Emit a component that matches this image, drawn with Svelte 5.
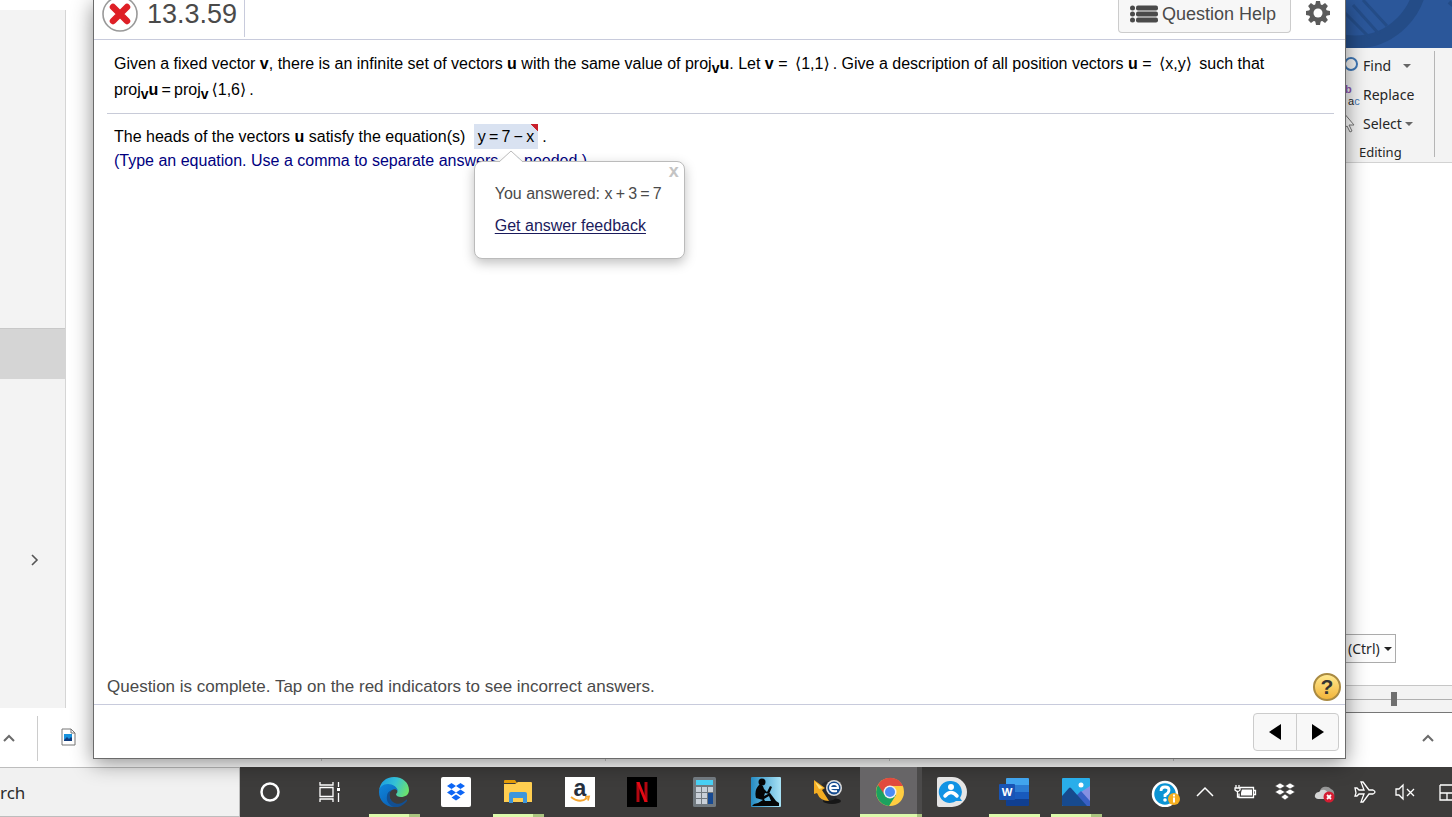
<script lang="ts">
  type App = { id: string; label: string; state?: 'open' | 'stacked' | 'active' };

  const apps: App[] = [
    { id: 'edge', label: 'Edge', state: 'stacked' },
    { id: 'dropbox', label: 'Dropbox' },
    { id: 'files', label: 'File Explorer', state: 'stacked' },
    { id: 'amazon', label: 'Amazon' },
    { id: 'netflix', label: 'Netflix' },
    { id: 'calc', label: 'Calculator' },
    { id: 'kindle', label: 'Kindle' },
    { id: 'converter', label: 'Converter' },
    { id: 'chrome', label: 'Chrome', state: 'active' },
    { id: 'assist', label: 'Assistant' },
    { id: 'word', label: 'Word', state: 'open' },
    { id: 'photos', label: 'Photos', state: 'stacked' },
  ];

  const tray = ['help', 'up', 'battery', 'dropboxTray', 'cloud', 'plane', 'mute', 'notes'];

  let popupOpen = $state(true);
  let search = $state('rch');
</script>

{#snippet chevronUp()}
  <svg width="12" height="8" viewBox="0 0 12 8"><path d="M1 7 6 2l5 5" fill="none" stroke="#6b6b6b" stroke-width="2" /></svg>
{/snippet}

{#snippet appIcon(id: string)}
  <svg width="30" height="30" viewBox="0 0 30 30" aria-hidden="true">
    {#if id === 'edge'}
      <defs>
        <linearGradient id="edgeTop" x1="0" y1=".3" x2="1" y2=".6">
          <stop offset="0" stop-color="#1b9de2" /><stop offset=".5" stop-color="#35c1d5" /><stop offset="1" stop-color="#6de36b" />
        </linearGradient>
        <linearGradient id="edgeLow" x1="0" y1="0" x2=".6" y2="1">
          <stop offset="0" stop-color="#0f86dc" /><stop offset="1" stop-color="#0b63b8" />
        </linearGradient>
      </defs>
      <path d="M0 14C1 5 7 0 15 0c9 0 15 6 15 13 0 5-4 7-8 7-3 0-5-1-5-3 1-1 2-2 1-4-1-3-4-5-8-5C5 8 1 10 0 14Z" fill="url(#edgeTop)" />
      <path d="M0 15c0-5 4-8 9-8s9 3 10 7c-2-2-4-2-6-1-5 3-3 11 4 15l2 1c-1 1-3 1-4 1C6 30 0 23 0 15Z" fill="url(#edgeLow)" />
      <path d="M13 13c-4 3-3 9 1 12 4 3 9 2 13-2 1-1 1 0 1 1-3 4-8 7-13 6-5-2-8-6-7-11 0-3 2-5 5-6Z" fill="#124f92" />
    {:else if id === 'dropbox'}
      <rect width="30" height="30" rx="2" fill="#fff" />
      <path d="m10.500 6 4.500 3-4.500 3L6 9Zm9 0L24 9l-4.500 3L15 9Zm-9 6.500 4.500 3-4.500 3-4.500-3Zm9 0 4.500 3-4.500 3-4.500-3ZM15 17.500l4.500 3L15 23.500l-4.500-3Z" fill="#0d66f5" />
    {:else if id === 'files'}
      <path d="M1 4q0-1 1-1h10l2 3H1Z" fill="#e39b06" />
      <path d="M1 7h11l3-2h13q1 0 1 1v19H1Z" fill="#ffce50" />
      <path d="M6 26V17q0-2 2-2h14q2 0 2 2v9h-4v-5H10v5Z" fill="#3d96dd" />
    {:else if id === 'amazon'}
      <rect width="30" height="30" fill="#fff" />
      <text x="15" y="19" text-anchor="middle" font-family="Liberation Sans, sans-serif" font-weight="700" font-size="23" fill="#252f3e">a</text>
      <path d="M6 20q9 7 16 1M20 20l4-.5-1 4" fill="none" stroke="#f5a52f" stroke-width="1.800" />
    {:else if id === 'netflix'}
      <rect width="30" height="30" fill="#000" />
      <path d="M11 5v20M19 5v20" stroke="#b20710" stroke-width="3" />
      <path d="M9.500 5h3l8 20h-3Z" fill="#e50914" />
    {:else if id === 'calc'}
      <rect x="4" width="23" height="30" rx="1.500" fill="#71797f" />
      <rect x="7" y="3" width="17" height="5" fill="#48cff3" />
      <path d="M7 10h5v5H7Zm6 0h5v5h-5Zm6 0h5v5h-5ZM7 16h5v5H7Zm6 0h5v5h-5ZM7 22h5v5H7Zm6 0h5v5h-5Z" fill="#c9d0d8" />
      <path d="M19 16h5v11h-5Z" fill="#174a92" />
    {:else if id === 'kindle'}
      <defs><linearGradient id="sky"><stop stop-color="#258cc4" /><stop offset="1" stop-color="#a8e2f5" /></linearGradient></defs>
      <rect width="30" height="30" rx="1" fill="url(#sky)" />
      <circle cx="11" cy="5" r="3.500" fill="#050505" />
      <path d="M8 8q4-1 5 4l3 3 3-6 2 1-3 7-4-1-1 3 6-3 6 8 3 2v3H1l2-2 4-1 5-3-7-2Q3 13 8 8Z" fill="#050505" />
      <path d="m13 22 5-3 2 5h-6Z" fill="#62b7df" />
    {:else if id === 'converter'}
      <ellipse cx="19" cy="24" rx="9" ry="3" fill="#171717" />
      <circle cx="16" cy="14" r="10" fill="#2a2a2b" />
      <path d="m1 3 11 8-3 2 7 11q-9 0-12-8l-3 1Z" fill="#f4ad22" />
      <path d="m2 5 8 6-4 1Z" fill="#ffe27b" />
      <circle cx="21" cy="11" r="8" fill="#dedede" />
      <circle cx="21" cy="11" r="6.500" fill="#154b8e" />
      <path d="M17 11h8q0-4-4-4t-4 4 7 3" fill="none" stroke="#fff" stroke-width="2" />
    {:else if id === 'chrome'}
      <circle cx="15" cy="15" r="14" fill="#ffcd41" />
      <path d="M15 15 3 8a14 14 0 0 0 11 21l7-11Z" fill="#1ba15f" />
      <path d="M3 8a14 14 0 0 1 25 1H15a6 6 0 0 0-6 8Z" fill="#e04a3f" />
      <circle cx="15" cy="15" r="6.500" fill="#f1f1f1" />
      <circle cx="15" cy="15" r="5" fill="#4c8bf5" />
    {:else if id === 'assist'}
      <path d="M2 0h13a15 15 0 0 1 0 30H2Q0 30 0 28V2q0-2 2-2Z" fill="#e5e5e5" />
      <path d="M14 4a11 11 0 1 0 5 20h6l-2-3A11 11 0 0 0 14 4Z" fill="#1193e4" />
      <circle cx="14" cy="10" r="3" fill="#fff" />
      <path d="M8 19q6-7 12 0" fill="none" stroke="#fff" stroke-width="3.500" stroke-linecap="round" />
    {:else if id === 'word'}
      <path d="M7 2q0-1 1-1h21q1 0 1 1v6H7Z" fill="#41a5ee" />
      <path d="M7 8h23v7H7Z" fill="#2b7cd3" />
      <path d="M7 15h23v7H7Z" fill="#185abd" />
      <path d="M7 22h23v6q0 1-1 1H8q-1 0-1-1Z" fill="#103f91" />
      <rect y="7" width="16" height="16" rx="1" fill="#1854b5" />
      <text x="8" y="19" text-anchor="middle" font-family="Open Sans, sans-serif" font-weight="700" font-size="11" fill="#fff">W</text>
    {:else if id === 'photos'}
      <rect x="1" y="1" width="28" height="28" rx="1" fill="#29aeea" />
      <path d="M29 9v18L17 17Z" fill="#8790e2" />
      <path d="m15 19 5-5 9 10v5H18Z" fill="#3a60c4" />
      <path d="M1 19 8 11q1-1 2 0l16 18H2q-1 0-1-1Z" fill="#174a8e" />
      <circle cx="20" cy="8" r="2.500" fill="#fff" />
    {/if}
  </svg>
{/snippet}

{#snippet trayIcon(id: string)}
  <svg width="30" height="30" viewBox="0 0 30 30" fill="none" stroke="#fff" stroke-width="1.300" aria-hidden="true">
    {#if id === 'help'}
      <circle cx="15" cy="17" r="12" fill="#0b94d4" stroke-width="2.500" />
      <path d="M11 14q0-4 4-4t4 3-4 5v2" stroke-width="2.800" />
      <circle cx="15" cy="23" r="1.800" fill="#fff" stroke="none" />
      <circle cx="24" cy="22" r="6" fill="#f5ae20" stroke="none" />
      <path d="M24 20.500v5M24 17.500v2" stroke-width="2" />
    {:else if id === 'up'}
      <path d="m7 19 8-8 8 8" stroke-width="1.500" />
    {:else if id === 'battery'}
      <path d="M10 10.500h13.500v10H9v-4M24 13.500h1.500v4H24" />
      <path d="M12 12.500h10v6H11v-3Z" fill="#fff" stroke="none" />
      <path d="M6 8v3M9 8v3M5 11h5v2q-2 3-5 0ZM7.500 15v5H9" />
    {:else if id === 'dropboxTray'}
      <path d="m10 6 5 3-5 3-5-3Zm10 0 5 3-5 3-5-3ZM10 12l5 3-5 3-5-3Zm10 0 5 3-5 3-5-3ZM15 17l4 3-4 3-4-3Z" fill="#fff" stroke="#3c3b3a" stroke-width=".6" />
    {:else if id === 'cloud'}
      <path d="M10 14a6 5 0 0 1 11-2q4 1 3 8H12Z" fill="#969696" stroke="none" />
      <path d="M8 22q-4-1-3-4 1-3 4-3 2-3 6-2 4 2 3 9Z" fill="#d5d5d5" stroke="none" />
      <circle cx="19" cy="20" r="5.500" fill="#d51d32" stroke="none" />
      <path d="m17 18 4 4m0-4-4 4" stroke-width="1.800" />
    {:else if id === 'plane'}
      <path d="M5 11h2l2 2h5l-3-8h2l6 8h4q4 2 0 4h-4l-6 8h-2l3-8H9l-2 2H5l1-3Z" />
    {:else if id === 'mute'}
      <path d="M6 12h3l4-4v14l-4-4H6Zm11 0 7 7m0-7-7 7" />
    {:else}
      <path d="M1 8h14v15H1v-15m0 8h14m-7 0v7" />
    {/if}
  </svg>
{/snippet}

{#snippet vec(a: string, b: string)}
  <span class="vec"><span class="angle">⟨</span>{a},{b}<span class="angle">⟩</span></span>
{/snippet}

{#snippet proj()}
  proj<sub>v</sub>
{/snippet}

<div class="screen">
  <div class="desktop">
    <div class="behind">
      <aside class="nav-pane">
        <div class="nav-item"></div>
        <button class="expand" aria-label="Expand">
          <svg width="8" height="14" viewBox="0 0 8 14"><path d="m1 2 5 5-5 5" fill="none" stroke="#555" stroke-width="1.600" /></svg>
        </button>
      </aside>

      <aside class="word">
        <div class="word-title">
          <svg width="107" height="48" viewBox="0 0 107 48" aria-hidden="true">
            <g fill="none" stroke="#244c87">
              <circle cx="10" cy="-24" r="66" stroke-width="13" />
              <path d="m-2 11 27 27M8 5l26 29M18 0l24 26" stroke-width="3" />
              <path d="m104 2 6 5" stroke-width="4" />
            </g>
          </svg>
        </div>
        <div class="ribbon">
          <div class="group">
            <button>
              <svg width="16" height="18" viewBox="0 0 16 18"><circle cx="6" cy="7" r="6" fill="none" stroke="#3f77b5" stroke-width="2" /></svg>
              <span>Find</span><i class="caret far"></i>
            </button>
            <button>
              <span class="swap"><b>b</b><span>a<em>c</em></span></span>
              <span>Replace</span>
            </button>
            <button>
              <svg width="16" height="18" viewBox="0 0 16 18"><path d="M-2-3 9 10H4l3 6-2 1-3-6-4 3" fill="#fff" stroke="#777" /></svg>
              <span>Select</span><i class="caret"></i>
            </button>
            <div class="group-name">Editing</div>
          </div>
        </div>
        <div class="page">
          <button class="ctrl">(Ctrl) <i class="caret dark"></i></button>
        </div>
        <div class="status">
          <input type="range" aria-label="Zoom" min="0" max="100" value="46" />
        </div>
      </aside>
    </div>

    <div class="shelf">
      <button class="shelf-first" aria-label="Options">{@render chevronUp()}</button>
      <div class="download">
        <svg width="15" height="18" viewBox="0 0 15 18">
          <path d="M1 1h9l4 4v12H1Z" fill="#fff" stroke="#777" />
          <path d="M10 1v4h4" fill="none" stroke="#777" />
          <rect x="3" y="6" width="8" height="7" fill="#1691dd" />
          <path d="m3 12 3-3 2 2 2-2 1 1v3H3Z" fill="#103b7c" />
        </svg>
      </div>
      {#each [1, 2, 3, 4] as n (n)}
        <div class="download"></div>
      {/each}
      <button class="shelf-last" aria-label="Download options">{@render chevronUp()}</button>
    </div>

    <main class="window">
      <header>
        <div class="title">
          <svg width="36" height="32" viewBox="0 4 36 32" aria-label="Incorrect">
            <circle cx="18" cy="18" r="17" fill="#fff" stroke="#999" stroke-width="1.600" />
            <path d="m11 11 14 14m0-14L11 25" stroke="#de1f26" stroke-width="6.500" stroke-linecap="round" />
          </svg>
          <h1>13.3.59</h1>
        </div>
        <button class="help-btn">
          <svg width="28" height="18" viewBox="0 0 28 18" fill="#4a4a4a">
            <circle cx="2.500" cy="3" r="2.500" /><circle cx="2.500" cy="9" r="2.500" /><circle cx="2.500" cy="15" r="2.500" />
            <rect x="6" y="0.500" width="22" height="5" rx="2" /><rect x="6" y="6.500" width="22" height="5" rx="2" /><rect x="6" y="12.500" width="22" height="5" rx="2" />
          </svg>
          Question Help
        </button>
        <button class="gear" aria-label="Settings">
          <svg width="26" height="26" viewBox="-13 -13 26 26">
            <g fill="#5b5b5b">
              {#each [0, 45, 90, 135] as angle (angle)}
                <path d="M-2-12h4L3-7V7l-1 5h-4l-1-5V-7Z" transform="rotate({angle})" />
              {/each}
              <circle r="9" />
            </g>
            <circle r="4.500" fill="#fff" />
          </svg>
        </button>
      </header>

      <section class="question">
        <p>
          Given a fixed vector <b>v</b>, there is an infinite set of vectors <b>u</b> with the same value of {@render proj()}<b>u</b>. Let <b>v</b> = {@render vec('1', '1')}. Give a description of all position vectors <b>u</b> = {@render vec('x', 'y')} such that
          <span class="math">{@render proj()}<b>u</b>&thinsp;=&thinsp;{@render proj()}{@render vec('1', '6')}</span>.
        </p>
      </section>

      <section class="work">
        <p>
          The heads of the vectors <b>u</b> satisfy the equation(s)
          <span class="answer"><button onclick={() => (popupOpen = true)}>y&thinsp;=&thinsp;7&thinsp;−&thinsp;x</button>
            {#if popupOpen}
              <span class="popup" role="dialog" aria-label="Answer">
                <svg class="tip" width="24" height="13" viewBox="0 0 24 13"><path d="M0 12 12 1l12 11v1H0Z" fill="#fff" /><path d="M0 12 12 1l12 11" fill="none" stroke="#bbb" /></svg>
                <button class="close" aria-label="Close" onclick={() => (popupOpen = false)}>x</button>
                <span class="line">You answered: <span class="math">x&thinsp;+&thinsp;3&thinsp;=&thinsp;7</span></span>
                <a href="#feedback">Get answer feedback</a>
              </span>
            {/if}
          </span>.
        </p>
        <p class="hint">(Type an equation. Use a comma to separate answers as needed.)</p>
      </section>

      <div class="message">
        <span>Question is complete. Tap on the red indicators to see incorrect answers.</span>
        <button class="hint-btn" aria-label="Help">?</button>
      </div>

      <footer>
        <div class="pager">
          <button aria-label="Previous"><svg width="12" height="18" viewBox="0 0 12 18"><path d="M12 1v16L0 9Z" /></svg></button>
          <button aria-label="Next"><svg width="12" height="18" viewBox="0 0 12 18"><path d="M0 1v16l12-8Z" /></svg></button>
        </div>
      </footer>
    </main>
  </div>

  <nav class="taskbar">
    <input class="search" type="text" aria-label="Search" bind:value={search} />
    <button class="sys" aria-label="Cortana">
      <svg width="22" height="22" viewBox="0 0 22 22"><circle cx="11" cy="11" r="8.500" fill="none" stroke="#fff" stroke-width="2.500" /></svg>
    </button>
    <button class="sys" aria-label="Task view">
      <svg width="22" height="22" viewBox="0 0 22 22" fill="none" stroke="#fff" stroke-width="1.300"><path d="M1 1v3h13V1M1 6.500h13v9H1ZM1 21v-3h13v3M19.500 1v5M19.500 12v9" /><path d="M18 7h3v3h-3Z" fill="#fff" stroke="none" /></svg>
    </button>
    <div class="apps">
      {#each apps as app (app.id)}
        <button class="app {app.state ?? ''}" aria-label={app.label}>{@render appIcon(app.id)}</button>
      {/each}
    </div>
    <div class="tray">
      {#each tray as id (id)}
        <button class:last={id === 'notes'} aria-label={id}>{@render trayIcon(id)}</button>
      {/each}
    </div>
  </nav>
</div>

<style>
  :global(body) { overflow: hidden; background: #fff; }

  button {
    padding: 0;
    border: 0;
    background: none;
    font: inherit;
    color: inherit;
  }
  svg { display: block; flex: none; }

  .screen {
    display: flex;
    flex-direction: column;
    height: 100vh;
    font-family: "Noto Sans", sans-serif;
    font-size: 14px;
    color: #262626;
    overflow: hidden;
  }
  .desktop {
    position: relative;
    flex: 1;
    display: flex;
    flex-direction: column;
    min-height: 0;
  }
  .behind {
    flex: 1;
    display: flex;
    justify-content: space-between;
    min-height: 0;
  }

  .nav-pane {
    display: flex;
    flex-direction: column;
    width: 65px;
    margin: 10px 0 5px;
    background: #f3f3f3;
    border-right: 1px solid #d5d5d5;
  }
  .nav-item {
    height: 50px;
    margin-top: 318px;
    background: #d5d5d5;
    border-top: 1px solid #c8c8c8;
  }
  .expand { align-self: center; margin: 174px 0 0 4px; }

  .word {
    display: flex;
    flex-direction: column;
    width: 107px;
  }
  .word-title { height: 48px; background: #2b579a; overflow: hidden; }
  .ribbon {
    display: flex;
    height: 114px;
    background: #f3f3f3;
    border-bottom: 1px solid #d2d2d2;
  }
  .group {
    width: 89px;
    margin: 3px 0 5px;
    border-right: 1px solid #b5b5b5;
  }
  .group button {
    display: flex;
    align-items: center;
    gap: 2px;
    height: 29px;
    line-height: 20px;
  }
  .group-name { padding-left: 14px; font-size: 13px; line-height: 29px; }
  .swap { width: 16px; font: 11px/12px "Liberation Sans", Arial, sans-serif; text-align: left; }
  .swap b { display: block; color: #8d55ad; }
  .swap > span { padding-left: 3px; }
  .swap em { font-style: normal; color: #3f77b5; }
  .caret {
    margin-left: 1px;
    border: solid transparent;
    border-width: 4px 4px 0;
    border-top-color: #666;
  }
  .caret.far { margin-left: 10px; }
  .caret.dark { border-top-color: #222; }
  .page { flex: 1; display: flex; align-items: flex-end; padding-bottom: 22px; }
  .ctrl {
    display: flex;
    align-items: center;
    gap: 3px;
    height: 29px;
    padding: 0 3px 0 2px;
    border: 1px solid #ababab;
    background: #fdfdfd;
  }
  .status {
    display: flex;
    align-items: center;
    height: 26px;
    background: #f3f3f3;
    border-top: 1px solid #c6c6c6;
    border-bottom: 1px solid #777;
  }
  .status input {
    appearance: none;
    width: 100%;
    height: 1px;
    margin: 0;
    background: #b0b0b0;
  }
  .status input::-webkit-slider-thumb {
    appearance: none;
    width: 6px;
    height: 14px;
    background: #6f6f6f;
  }

  .shelf { display: flex; height: 54px; background: #fff; }
  .shelf button { flex: none; display: flex; justify-content: center; align-items: center; height: 50px; }
  .shelf-first { width: 37px; padding-right: 19px; }
  .shelf-last { margin-left: auto; width: 48px; }
  .download {
    flex: 0 1 284px;
    display: flex;
    align-items: center;
    height: 45px;
    margin-top: 3px;
    padding: 0 0 4px 23px;
    border-left: 1px solid #ccc;
    box-sizing: border-box;
  }
  .download:nth-child(n + 6) { flex: none; width: 10px; }

  .window {
    position: absolute;
    inset: 0 106px 8px 93px;
    display: flex;
    flex-direction: column;
    background: #fff;
    border: solid #6b6b6b;
    border-width: 0 1px 1px;
    box-shadow: 0 4px 20px rgba(0, 0, 0, 0.45);
    font: 16px/26px "Liberation Sans", Arial, sans-serif;
    color: #000;
  }
  header {
    display: flex;
    align-items: flex-start;
    height: 39px;
    border-bottom: 1px solid #c8cbdc;
    color: #4a4a4a;
  }
  .title {
    display: flex;
    align-items: flex-start;
    gap: 9px;
    height: 37px;
    padding: 0 7px 0 8px;
    border-right: 1px solid #c8cbdc;
  }
  h1 { margin: 0; font-size: 27px; line-height: 29px; font-weight: 400; }
  .help-btn {
    display: flex;
    align-items: center;
    gap: 4px;
    height: 33px;
    margin-left: auto;
    padding: 0 14px 4px 11px;
    border: 1px solid #ccc;
    border-top: 0;
    border-radius: 0 0 4px 4px;
    background: #f7f7f7;
    font-size: 18px;
    box-sizing: border-box;
  }
  .gear { margin: 0 14px; }

  .question {
    margin: 0 11px 0 13px;
    padding: 11px 50px 10px 7px;
    border-bottom: 1px solid #c8cbd8;
  }
  .work { flex: 1; padding: 10px 20px; line-height: 23px; }
  p { margin: 0; }
  .math { white-space: nowrap; }
  sub { font-weight: 700; line-height: 0; font-size: 14px; vertical-align: -4px; }
  .vec { margin: 0 3px; }
  .angle { font-family: "DejaVu Sans", sans-serif; }
  .answer { position: relative; display: inline-block; margin: 0 4px; }
  .answer > button {
    padding: 0 4px;
    height: 25px;
    background: linear-gradient(45deg, transparent 50%, #c9202c 50%) top right / 7px 7px no-repeat, #d9e2f1;
  }
  .hint { color: #000080; }
  .popup {
    position: absolute;
    top: 37px;
    left: 0;
    display: flex;
    flex-direction: column;
    gap: 6px;
    width: max-content;
    padding: 19px 22px 19px 20px;
    border: 1px solid #bbb;
    border-radius: 8px;
    background: #fff;
    box-shadow: 0 4px 12px rgba(0, 0, 0, 0.25);
    line-height: 26px;
    color: #4a4a4a;
  }
  .popup a { color: #1b1b5c; text-underline-offset: 2px; }
  .tip { position: absolute; top: -12px; left: 24px; }
  .close {
    position: absolute;
    top: 0;
    right: 5px;
    font-weight: 700;
    font-size: 18px;
    line-height: 18px;
    color: #c4c4c4;
  }

  .message {
    display: flex;
    justify-content: space-between;
    align-items: center;
    padding: 0 4px 3px 13px;
    border-bottom: 1px solid #c8cbdc;
    font-size: 17px;
    color: #4a4a4a;
  }
  .hint-btn {
    width: 28px;
    height: 28px;
    border: 2px solid #a98a42;
    border-radius: 50%;
    background: linear-gradient(#ffe88f, #f2b53b);
    font-size: 21px;
    line-height: 24px;
    font-weight: 700;
    color: #333;
  }
  footer { display: flex; justify-content: flex-end; padding: 8px 6px 7px; }
  .pager {
    display: flex;
    border: 1px solid #ccc;
    border-radius: 4px;
    background: #f8f8f8;
  }
  .pager button { display: flex; align-items: center; justify-content: center; width: 42px; height: 36px; }
  .pager button + button { border-left: 1px solid #ccc; }

  .taskbar { display: flex; height: 50px; background: #3d3c3b; }
  .search {
    width: 240px;
    padding: 0;
    border: solid #bdbdbd;
    border-width: 1px 1px 1px 0;
    background: #f1f1f1;
    font: 17px "Noto Sans", sans-serif;
    color: #2b2b2b;
    box-sizing: border-box;
  }
  .taskbar button { display: flex; align-items: center; justify-content: center; flex: none; }
  .sys { width: 60px; }
  .apps { display: flex; margin-left: 4px; }
  .taskbar .app { position: relative; width: 62px; padding-right: 2px; box-sizing: border-box; }
  .app.active { background: linear-gradient(90deg, #676567 57px, #4b4a4a 57px); }
  .app.open::after,
  .app.stacked::after,
  .app.active::after {
    content: '';
    position: absolute;
    bottom: 0;
    left: 5px;
    width: 51px;
    height: 3px;
    background: #dcfaac;
  }
  .app.stacked::after { background: linear-gradient(90deg, #dcfaac 40px, #a9c47f 40px); }
  .app.active::after { left: 0; width: 100%; background: linear-gradient(90deg, #dcfaac 57px, #a9c47f 57px); }
  .tray { display: flex; margin-left: auto; }
  .tray button { width: 40px; }
  .tray button.last { width: 27px; justify-content: flex-start; padding-left: 14px; overflow: hidden; box-sizing: border-box; }
</style>
